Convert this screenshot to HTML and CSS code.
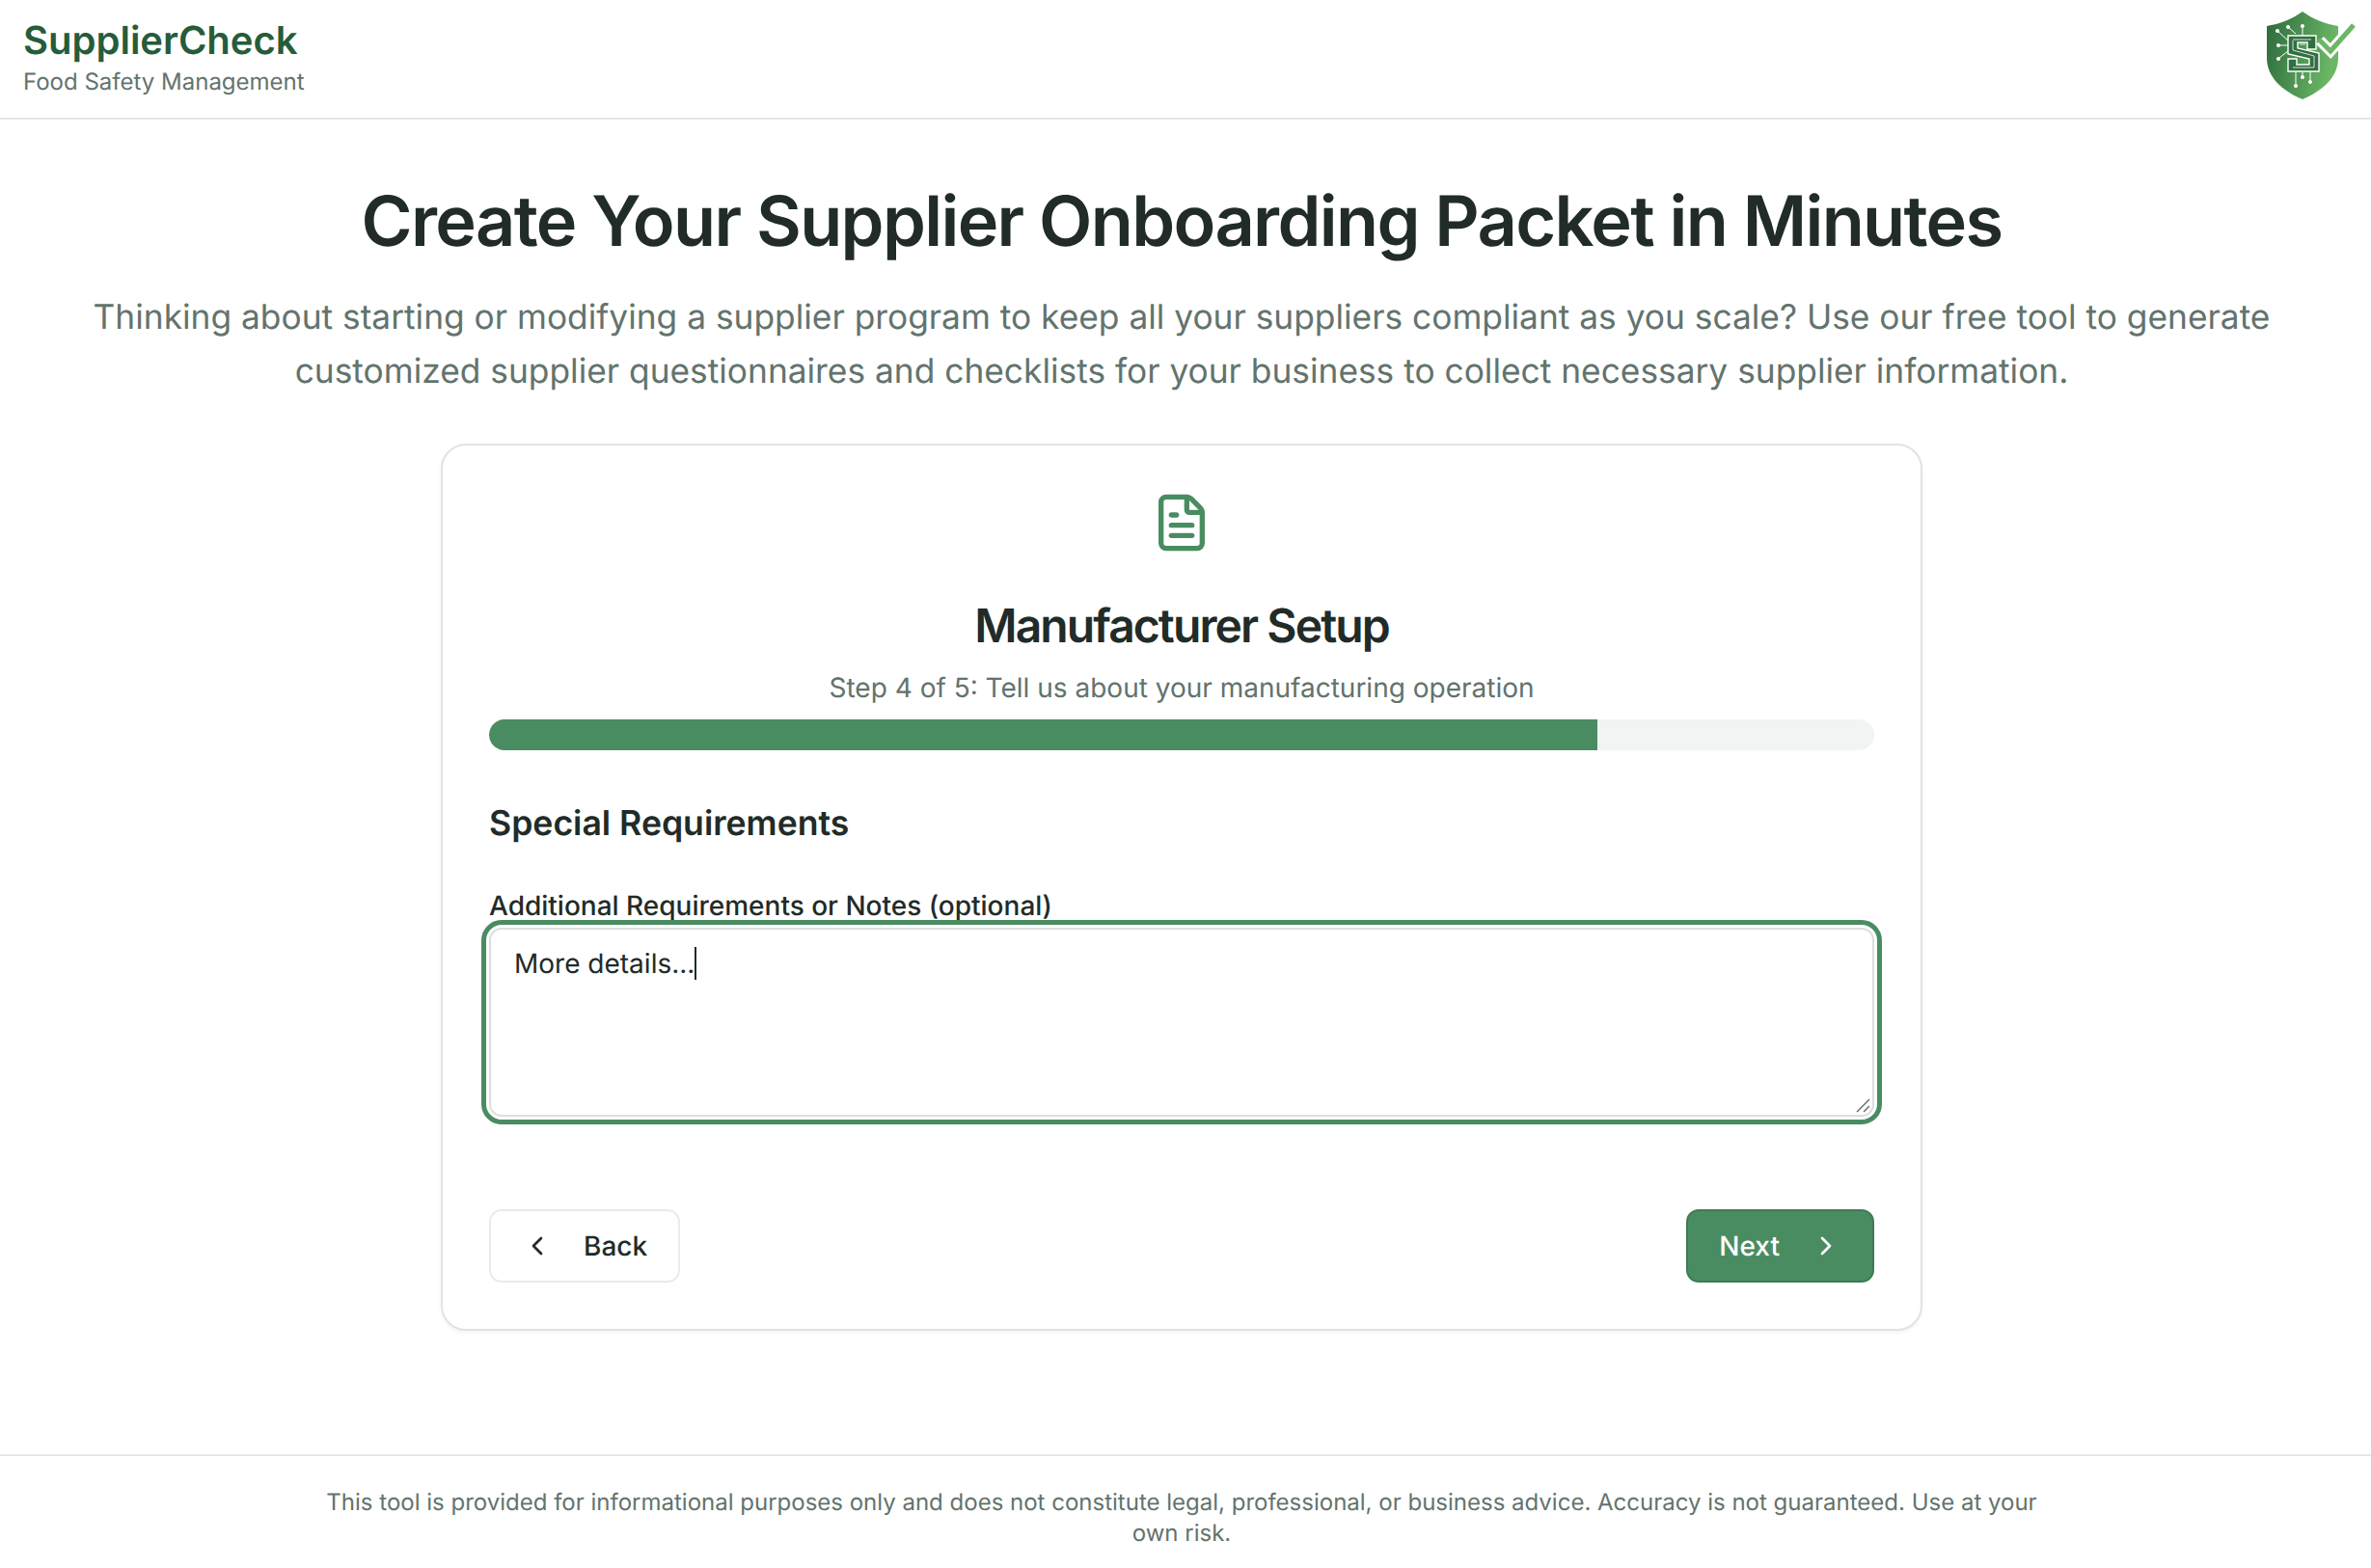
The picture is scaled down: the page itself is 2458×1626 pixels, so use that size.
FILE: index.html
```html
<!DOCTYPE html>
<html lang="en">
<head>
<meta charset="utf-8">
<title>SupplierCheck</title>
<link rel="stylesheet" href="styles.css">
</head>
<body>
<header class="topbar">
  <div class="brand">
    <div class="brand-name">SupplierCheck</div>
    <div class="brand-sub">Food Safety Management</div>
  </div>
  <svg class="logo" viewBox="0 0 128 125" aria-hidden="true">
    <defs><linearGradient id="lg" x1="0" y1="0" x2="1" y2="0.25"><stop offset="0" stop-color="#2b6a3c"/><stop offset="1" stop-color="#6cb765"/></linearGradient></defs>
    <path d="M57 12C46 20 33 25 20 27V60C20 80 36 94 57 103C78 94 94 80 94 60V27C81 25 68 20 57 12Z" fill="url(#lg)"/>
    <path d="M75 42L86 53L109 27" fill="none" stroke="#fff" stroke-width="11"/>
    <path d="M74 41L86 53L110 26" fill="none" stroke="#6cb765" stroke-width="5"/>
    <path d="M42 37H71V51H62V44H52V50L74 55V74H42V61H51V67H64V61L42 56Z" fill="#2f6f40" stroke="#fff" stroke-width="1.4"/>
    <path d="M47 41H66M47 42V52L69 58V70H47M54 46H60" fill="none" stroke="#fff" stroke-width=".8"/>
    <g stroke="#fff" stroke-width="1" fill="#fff">
      <path d="M31 32L42 42M42 28L50 35M57 27V37M32 47H42M33 60L42 53M50 75V88M57 75V80M65 75V85" fill="none"/>
      <circle cx="31" cy="32" r="1.6"/><circle cx="42" cy="28" r="1.6"/><circle cx="57" cy="27" r="1.6"/><circle cx="32" cy="47" r="1.6"/><circle cx="32" cy="61" r="1.6"/><circle cx="50" cy="89" r="1.6"/><circle cx="57" cy="80" r="1.6"/><circle cx="65" cy="85" r="1.6"/>
    </g>
  </svg>
</header>

<main class="page">
  <h1 class="hero-title">Create Your Supplier Onboarding Packet in Minutes</h1>
  <p class="hero-text">Thinking about starting or modifying a supplier program to keep all your suppliers compliant as you scale? Use our free tool to generate customized supplier questionnaires and checklists for your business to collect necessary supplier information.</p>

  <section class="card">
    <svg class="doc-icon" viewBox="0 0 24 24" fill="none" stroke="currentColor" stroke-width="2" stroke-linecap="round" stroke-linejoin="round" aria-hidden="true">
      <path d="M6 22a2 2 0 0 1-2-2V4a2 2 0 0 1 2-2h8a2.4 2.4 0 0 1 1.706.706l3.588 3.588A2.4 2.4 0 0 1 20 8v12a2 2 0 0 1-2 2z"/>
      <path d="M14 2v5a1 1 0 0 0 1 1h5"/>
      <path d="M10 9H8"/><path d="M16 13H8"/><path d="M16 17H8"/>
    </svg>
    <h2 class="card-title">Manufacturer Setup</h2>
    <p class="card-sub">Step 4 of 5: Tell us about your manufacturing operation</p>
    <div class="progress"><div class="progress-fill" style="width:80%"></div></div>
    <h3 class="section-title">Special Requirements</h3>
    <label class="field-label" for="notes">Additional Requirements or Notes (optional)</label>
    <div class="fake-area" id="notes"><span class="area-text">More details...</span><span class="caret"></span>
      <svg class="grip" viewBox="0 0 16 16" aria-hidden="true"><path d="M2 15L15 2M9 15L15 9" stroke="#666" stroke-width="1.4" fill="none"/></svg>
    </div>
    <div class="actions">
      <button class="btn btn-back" type="button">
        <svg class="chev" viewBox="0 0 24 24" fill="none" stroke="currentColor" stroke-width="2" stroke-linecap="round" stroke-linejoin="round" aria-hidden="true"><path d="m15 18-6-6 6-6"/></svg>
        <span>Back</span>
      </button>
      <button class="btn btn-next" type="button">
        <span>Next</span>
        <svg class="chev" viewBox="0 0 24 24" fill="none" stroke="currentColor" stroke-width="2" stroke-linecap="round" stroke-linejoin="round" aria-hidden="true"><path d="m9 18 6-6-6-6"/></svg>
      </button>
    </div>
  </section>
</main>

<footer class="footer">
  <p class="footer-text">This tool is provided for informational purposes only and does not constitute legal, professional, or business advice. Accuracy is not guaranteed. Use at your own risk.</p>
</footer>
</body>
</html>
```

FILE: styles.css
```css
* { box-sizing: border-box; }
html, body { margin: 0; padding: 0; }
body {
  font-family: Inter, "Noto Sans", sans-serif;
  text-rendering: geometricPrecision;
  color: #212b28;
  background: #fff;
  min-height: 1626px;
  display: flex;
  flex-direction: column;
}
.topbar {
  height: 124px;
  border-bottom: 2px solid #e3e8e6;
  padding-left: 24px;
  display: flex;
  justify-content: space-between;
  align-items: center;
}
.brand { padding-top: 1px; }
.brand-name { font-size: 40px; font-weight: 600; line-height: 40px; margin-bottom: 7px; color: #265c3a; }
.brand-sub { font-size: 24px; line-height: 32px; color: #63736d; }
.logo { width: 128px; height: 125px; margin-top: 2px; }
.page { flex: 1; display: flex; flex-direction: column; align-items: center; padding: 66px 72px 0 64px; }
.hero-title { margin: 0; font-size: 72px; line-height: 80px; font-weight: 600; letter-spacing: -1.63px; text-align: center; color: #212b28; }
.hero-text { margin: 31px 0 0; width: 2300px; font-size: 35.32px; line-height: 56px; text-align: center; color: #63736d; }
.card {
  margin-top: 47px;
  width: 1536px;
  border: 2px solid #dfe4e2;
  border-radius: 26px;
  box-shadow: 0 2px 4px rgba(0,0,0,.05);
  padding: 48px;
  display: flex;
  flex-direction: column;
  align-items: center;
}
.doc-icon { width: 64px; height: 64px; color: #4a8c62; flex: none; }
.card-title { margin: 43px 0 0; font-size: 48px; line-height: 64px; font-weight: 600; letter-spacing: -1.9px; }
.card-sub { margin: 12px 0 0; font-size: 28px; line-height: 40px; color: #63736d; }
.progress { margin-top: 13px; width: 100%; height: 32px; border-radius: 16px; background: #f2f4f3; overflow: hidden; flex: none; }
.progress-fill { height: 100%; background: #4a8c62; }
.section-title { align-self: flex-start; margin: 52px 0 0; font-size: 35.6px; line-height: 48px; font-weight: 600; }
.field-label { align-self: flex-start; margin-top: 41px; font-size: 28px; line-height: 40px; font-weight: 500; }
.fake-area {
  position: relative;
  width: 100%;
  height: 196px;
  margin-top: 3px;
  border: 2px solid #d9dfdd;
  border-radius: 13px;
  outline: 5px solid #4a8c62;
  outline-offset: 3px;
  padding: 14px 24px;
  font-size: 28px;
  line-height: 42px;
  display: flex;
  align-items: flex-start;
}
.area-text { color: #212b28; }
.caret { width: 2px; height: 34px; margin-top: 4px; background: #212b28; }
.grip { position: absolute; right: 2px; bottom: 2px; width: 16px; height: 16px; }
.actions { width: 100%; margin-top: 96px; display: flex; justify-content: space-between; }
.btn { height: 76px; border-radius: 13px; font: 500 28px Inter, sans-serif; text-rendering: geometricPrecision; display: flex; align-items: center; gap: 32px; padding: 0 32px; cursor: pointer; }
.btn-back { background: #fff; color: #212b28; border: 2px solid #e8ebea; }
.btn-next { background: #4a8c62; color: #fff; border: 2px solid #3f7a55; }
.chev { width: 32px; height: 32px; flex: none; }
.footer { border-top: 2px solid #e3e8e6; height: 118px; padding: 32px 8px 0 0; }
.footer-text { margin: 0 auto; width: 1800px; font-size: 24px; line-height: 32px; text-align: center; color: #63736d; }
```
